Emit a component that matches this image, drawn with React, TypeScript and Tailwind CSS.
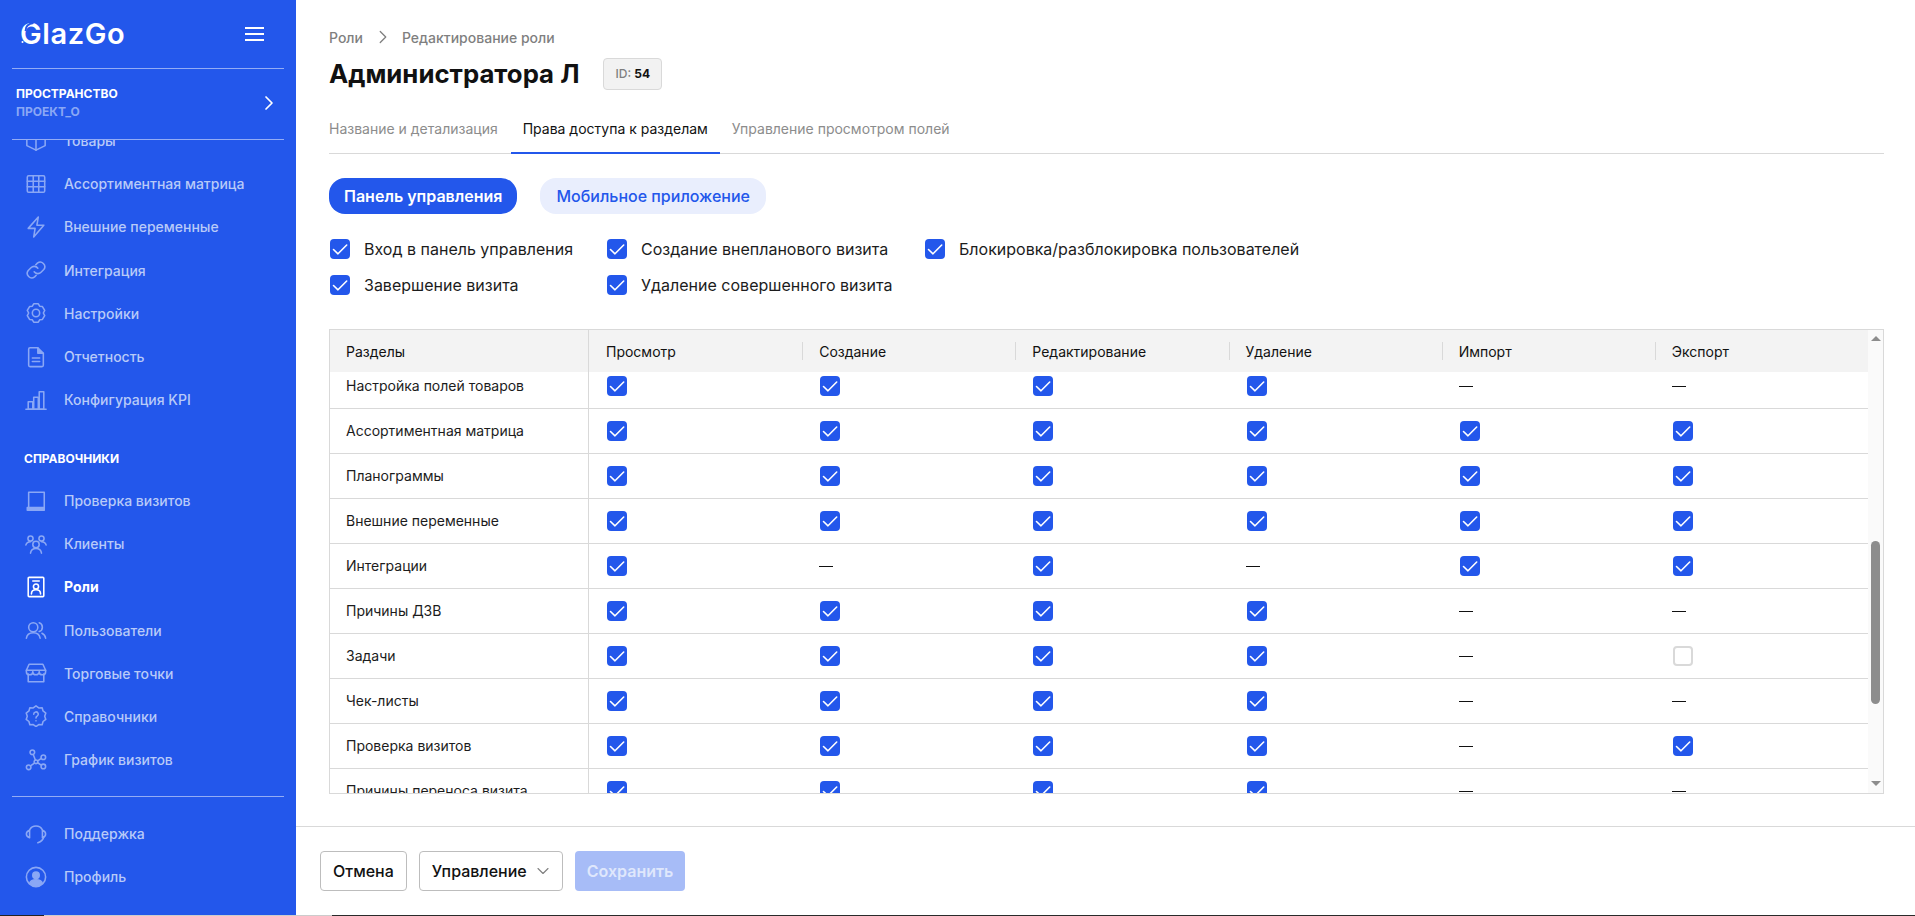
import { ChevronDown, ChevronRight } from "lucide-react";
import type { ReactNode } from "react";

function Svg({ children }: { children: ReactNode }) {
  return (
    <svg viewBox="0 0 24 24" fill="none" stroke="currentColor" strokeWidth="1.700" strokeLinecap="round" strokeLinejoin="round" className="w-[22px] h-[22px]">
      {children}
    </svg>
  );
}

const icons: Record<string, ReactNode> = {
  box: <Svg><path d="M2 6l10-4 10 4v11l-10 5-10-5z" /><path d="M2 6l10 4 10-4M12 10v12" /></Svg>,
  grid: <Svg><rect x="2.500" y="3" width="19" height="18" rx="1.500" /><path d="M2.500 9h19M2.500 15h19M9 3v18M15 3v18" /></Svg>,
  bolt: <Svg><path d="M14.500 1L3.500 13.500h7.500l-1.500 9.500 11-13h-7.500z" /></Svg>,
  link: <Svg><path d="M10 14a5 5 0 0 0 7.500.5l3-3a5 5 0 0 0-7-7l-1.700 1.700" /><path d="M14 10a5 5 0 0 0-7.500-.5l-3 3a5 5 0 0 0 7 7l1.700-1.700" /></Svg>,
  gear: <Svg><circle cx="12" cy="12" r="4" /><path d="M9.500 2h5l1.500 2.600 3 .4 2.500 4.200L20 12l1.500 2.800-2.500 4.200-3 .4L14.500 22h-5L8 19.400l-3-.4-2.500-4.200L4 12 2.500 9.200 5 5l3-.4z" /></Svg>,
  doc: <Svg><path d="M4 3.500A1.500 1.500 0 0 1 5.500 2H14l6 6v13a1.500 1.500 0 0 1-1.500 1.500h-13A1.500 1.500 0 0 1 4 21z" /><path d="M14 2v6h6" fill="currentColor" /><path d="M8 13h8M8 17h8" /></Svg>,
  bars: <Svg><path d="M1 22h22" /><rect x="3.500" y="14" width="5" height="8" /><rect x="9.500" y="9" width="5" height="13" /><rect x="15.500" y="3" width="5" height="19" /></Svg>,
  book: <Svg><path d="M4 19V2.500h17V21" /><path d="M2.500 19h18.500v3H2.500z" fill="currentColor" /></Svg>,
  team: <Svg><circle cx="12" cy="12.500" r="3.500" /><path d="M6 22c.5-3.500 3-5 6-5s5.500 1.500 6 5" /><circle cx="6" cy="6" r="2.800" /><circle cx="18" cy="6" r="2.800" /><path d="M1 13c.5-2 2.500-3.500 5-3.500M23 13c-.5-2-2.500-3.500-5-3.500" /></Svg>,
  role: <Svg><rect x="3.500" y="1.500" width="17" height="21" rx="1" /><path d="M8.500 5.500h7" /><circle cx="12" cy="11.500" r="2.800" /><path d="M7 19.500c0-3 2.200-4.500 5-4.500s5 1.500 5 4.500" /></Svg>,
  users: <Svg><circle cx="9" cy="9" r="5" /><path d="M1.500 21c.5-3.500 3.500-6 7.500-6s7 2.500 7.500 6" /><path d="M15.500 4.200a5 5 0 0 1 0 9.500M18.500 15.500c2.200.9 3.700 3 4 5.500" /></Svg>,
  store: <Svg><path d="M4.500 2.500h15L22.500 9h-21z" /><path d="M1.500 9v1.500a3.500 3.500 0 0 0 7 0 3.500 3.500 0 0 0 7 0 3.500 3.500 0 0 0 7 0V9" /><path d="M3.500 13v8.500h17V13" /></Svg>,
  help: <Svg><path d="M12 1l3 2.200 3.700-.2 1 3.500 3 2.300-1.200 3.500 1.200 3.400-3 2.300-1 3.500-3.700-.2-3 2.200-3-2.200-3.700.2-1-3.500-3-2.300 1.200-3.400L1.300 8.800l3-2.300 1-3.500 3.700.2z" /><path d="M9.500 10a2.500 2.500 0 1 1 3.700 2.200c-.8.500-1.200 1-1.200 2" /><path d="M12 17.200v.1" /></Svg>,
  graph: <Svg><circle cx="8" cy="3.500" r="2.500" /><circle cx="4" cy="20" r="2.500" /><circle cx="20" cy="9" r="2.500" /><circle cx="20" cy="19" r="2.500" /><circle cx="12" cy="14" r="2" /><path d="M9 6l2.300 6M6 18.500l4.300-3.200M13.800 13l4-2.800M13.800 15l4 2.500" /></Svg>,
  headset: <Svg><path d="M5 7.500a8 8 0 0 1 14 0" /><path d="M20.500 15c-.5 3-3 5.500-6.500 6.500" /><path d="M5 8C3 8.700 1.500 10.200 1.500 12S3 15.300 5 16zM19 8c2 .7 3.500 2.200 3.500 4s-1.500 3.300-3.500 4z" /></Svg>,
  profile: (
    <Svg>
      <circle cx="12" cy="12" r="10.500" />
      <circle cx="12" cy="10" r="3.500" fill="currentColor" />
      <path d="M5 19c1-3 4-4 7-4s6 1 7 4c-2 2-4.500 3-7 3s-5-1-7-3z" fill="currentColor" />
    </Svg>
  ),
};

function NavItem({ icon, label, active }: { icon: string; label: string; active?: boolean }) {
  return (
    <div className={`flex items-center h-[43.2px] pl-[25px] gap-[17px] text-[14px] ${active ? "text-white font-bold" : "text-[#b8caf8] font-medium"}`}>
      <span className={active ? "text-white" : "text-[#8aa7f5]"}>{icons[icon]}</span>
      <span>{label}</span>
    </div>
  );
}

function Check({ checked = true }: { checked?: boolean }) {
  if (!checked) {
    return <span className="w-5 h-5 block rounded-[4px] border-2 border-[#d9d9d9] bg-white" />;
  }
  return (
    <span className="w-5 h-5 shrink-0 flex items-center justify-center rounded-[4px] bg-[#2357eb] text-white">
      <svg viewBox="0 0 20 20" className="w-full h-full" fill="none" stroke="currentColor" strokeWidth="1.600" strokeLinecap="round" strokeLinejoin="round">
        <path d="M3.500 10.500l4.500 4.300 8.700-8.800" />
      </svg>
    </span>
  );
}

// 1 = галочка, 0 = пустой, null = тире
type Cell = 1 | 0 | null;
const rows: { name: string; cells: Cell[] }[] = [
  { name: "Настройка полей товаров", cells: [1, 1, 1, 1, null, null] },
  { name: "Ассортиментная матрица", cells: [1, 1, 1, 1, 1, 1] },
  { name: "Планограммы", cells: [1, 1, 1, 1, 1, 1] },
  { name: "Внешние переменные", cells: [1, 1, 1, 1, 1, 1] },
  { name: "Интеграции", cells: [1, null, 1, null, 1, 1] },
  { name: "Причины ДЗВ", cells: [1, 1, 1, 1, null, null] },
  { name: "Задачи", cells: [1, 1, 1, 1, null, 0] },
  { name: "Чек-листы", cells: [1, 1, 1, 1, null, null] },
  { name: "Проверка визитов", cells: [1, 1, 1, 1, null, 1] },
  { name: "Причины переноса визита", cells: [1, 1, 1, 1, null, null] },
];

const columns = ["Просмотр", "Создание", "Редактирование", "Удаление", "Импорт", "Экспорт"];
const gridCols = "grid grid-cols-[259px_repeat(6,1fr)]";

function GlazLogo() {
  return (
    <div className="relative flex items-center">
      <span className="text-[29px] leading-none font-semibold text-white tracking-[0.6px]">GlazGo</span>
      <svg viewBox="0 0 24 28" className="absolute left-[-1px] top-[-2px] w-[24px] h-[28px]" fill="none">
        <path d="M6.500 14c0-4.500 3-7.500 8-8" stroke="#2357eb" strokeWidth="1.800" />
        <circle cx="3.500" cy="25" r="1" fill="white" />
      </svg>
    </div>
  );
}

export default function App() {
  return (
    <div className="flex flex-col h-[916px] w-full bg-white overflow-hidden text-[#111] font-['Inter',sans-serif]">
      <div className="flex flex-1 min-h-0">
        <aside className="w-[296px] shrink-0 bg-[#2357eb] flex flex-col">
          <div className="h-[69px] mx-3 shrink-0 border-b border-[#93acf5] flex items-center justify-between pl-[8px] pr-[20px] pb-[1px]">
            <GlazLogo />
            <div className="flex flex-col gap-[4px] w-[19px]">
              <span className="h-[2px] bg-white" />
              <span className="h-[2px] bg-white" />
              <span className="h-[2px] bg-white" />
            </div>
          </div>
          <div className="h-[71px] mx-3 shrink-0 border-b border-[#93acf5] flex items-center justify-between pl-[4px] pr-[3px] pb-[2px]">
            <div className="flex flex-col gap-[4px]">
              <span className="text-[12px] leading-[14px] font-bold text-white">ПРОСТРАНСТВО</span>
              <span className="text-[12px] leading-[14px] font-bold text-[#8aa7f5]">ПРОЕКТ_О</span>
            </div>
            <ChevronRight className="w-6 h-6 text-white" strokeWidth={1.7} />
          </div>

          <div className="flex-1 overflow-hidden min-h-0">
            <div className="-mt-[21px]">
              <NavItem icon="box" label="Товары" />
              <NavItem icon="grid" label="Ассортиментная матрица" />
              <NavItem icon="bolt" label="Внешние переменные" />
              <NavItem icon="link" label="Интеграция" />
              <NavItem icon="gear" label="Настройки" />
              <NavItem icon="doc" label="Отчетность" />
              <NavItem icon="bars" label="Конфигурация KPI" />
              <div className="pl-[24px] pt-[28px] pb-[9.600px] text-[12px] leading-[20px] font-bold text-white">СПРАВОЧНИКИ</div>
              <NavItem icon="book" label="Проверка визитов" />
              <NavItem icon="team" label="Клиенты" />
              <NavItem icon="role" label="Роли" active />
              <NavItem icon="users" label="Пользователи" />
              <NavItem icon="store" label="Торговые точки" />
              <NavItem icon="help" label="Справочники" />
              <NavItem icon="graph" label="График визитов" />
            </div>
          </div>

          <div className="shrink-0 h-[119px]">
            <div className="mx-3 h-px bg-[#93acf5]" />
            <div className="pt-[15px]">
              <NavItem icon="headset" label="Поддержка" />
              <NavItem icon="profile" label="Профиль" />
            </div>
          </div>
        </aside>

        <main className="flex-1 min-w-0 flex flex-col">
          <div className="flex-1 min-h-0 pl-[33px] pr-[31px] pt-[27px]">
            <div className="flex items-center h-[20px] text-[14px] font-medium text-[#7f7f7f]">
              <span>Роли</span>
              <ChevronRight className="w-[22px] h-[22px] ml-[9px] mr-[8px] text-[#7f7f7f]" strokeWidth={1.4} />
              <span>Редактирование роли</span>
            </div>

            <div className="flex items-center mt-[11px] h-[32px]">
              <h1 className="text-[25.750px] font-bold leading-[32px] text-[#111]">Администратора Л</h1>
              <div className="ml-[24px] h-[32px] px-[11px] flex items-center rounded-[4px] border border-[#d9d9d9] bg-[#f2f2f2] text-[12px] font-medium text-[#7f7f7f]">
                ID:&nbsp;<span className="font-bold text-[#111]">54</span>
              </div>
            </div>

            <div className="flex mt-[20px] h-[44px] border-b border-[#d9d9d9] text-[14px]">
              <div className="pr-[13px] pt-[8px] text-[#8c8c8c]">Название и детализация</div>
              <div className="px-[12px] pt-[8px] text-[#111] border-b-2 border-[#2357eb] h-[44px]">Права доступа к разделам</div>
              <div className="px-[12px] pt-[8px] text-[#8c8c8c]">Управление просмотром полей</div>
            </div>

            <div className="flex gap-[23px] mt-[24px]">
              <button className="h-[36px] px-[15px] rounded-[16px] bg-[#2357eb] text-white text-[16px] font-semibold">Панель управления</button>
              <button className="h-[36px] px-[16px] rounded-[16px] bg-[#e9eefd] text-[#2357eb] text-[16px] font-medium">Мобильное приложение</button>
            </div>

            <div className="grid grid-cols-[277px_318px_auto] justify-start mt-[25px] gap-y-[16px] pl-[1px] text-[16px] text-[#1c1c1c]">
              <label className="flex items-center gap-[14px] h-[20px]"><Check /> Вход в панель управления</label>
              <label className="flex items-center gap-[14px] h-[20px]"><Check /> Создание внепланового визита</label>
              <label className="flex items-center gap-[14px] h-[20px]"><Check /> Блокировка/разблокировка пользователей</label>
              <label className="flex items-center gap-[14px] h-[20px]"><Check /> Завершение визита</label>
              <label className="flex items-center gap-[14px] h-[20px]"><Check /> Удаление совершенного визита</label>
            </div>

            <div className="flex mt-[34px] h-[465px] border border-[#d9d9d9] overflow-hidden">
              <div className="flex-1 min-w-0 flex flex-col">
                <div className={`${gridCols} h-[42px] bg-[#f3f3f3] items-center text-[14px] shrink-0 relative z-10`}>
                  <div className="pl-[16px] h-full flex items-center border-r border-[#d9d9d9]">Разделы</div>
                  {columns.map((c, i) => (
                    <div key={c} className="relative pl-[17px]">
                      {i > 0 && <span className="absolute left-0 top-[1px] h-[18px] w-[1px] bg-[#d9d9d9]" />}
                      {c}
                    </div>
                  ))}
                </div>
                <div className="flex-1 min-h-0 overflow-hidden">
                  <div className="-mt-[8px]">
                    {rows.map((r) => (
                      <div key={r.name} className={`${gridCols} h-[45px] border-b border-[#d9d9d9] items-center text-[14px] text-[#1c1c1c]`}>
                        <div className="pl-[16px] h-full flex items-center border-r border-[#d9d9d9] leading-none">{r.name}</div>
                        {r.cells.map((v, i) => (
                          <div key={i} className="pl-[18px] h-full flex items-center">
                            {v === null ? (
                              <span className="block w-[14px] h-[1px] bg-[#111] -ml-[1px]" />
                            ) : (
                              <Check checked={v === 1} />
                            )}
                          </div>
                        ))}
                      </div>
                    ))}
                  </div>
                </div>
              </div>
              {/* скроллбар */}
              <div className="w-[15px] shrink-0 bg-[#fafafa] flex flex-col items-center relative">
                <span className="mt-[6px] w-0 h-0 border-l-[5px] border-r-[5px] border-b-[5px] border-l-transparent border-r-transparent border-b-[#8d8d8d]" />
                <span className="absolute left-[3px] w-[9px] top-[211px] h-[163px] rounded-[5px] bg-[#8d8d8d]" />
                <span className="mt-auto mb-[7px] w-0 h-0 border-l-[5px] border-r-[5px] border-t-[5px] border-l-transparent border-r-transparent border-t-[#8d8d8d]" />
              </div>
            </div>
          </div>

          <div className="h-[89px] shrink-0 border-t border-[#d9d9d9] flex items-center gap-[12px] pl-[24px] text-[16px] font-medium">
            <button className="h-[40px] px-[12px] rounded-[4px] border border-[#bdbdbd] text-[#111]">Отмена</button>
            <button className="h-[40px] pl-[12px] pr-[9px] rounded-[4px] border border-[#bdbdbd] text-[#111] flex items-center gap-[6px]">
              Управление <ChevronDown className="w-[20px] h-[20px] text-[#7f7f7f]" strokeWidth={1.3} />
            </button>
            <button className="h-[40px] px-[12px] rounded-[4px] bg-[#a7bcf7] text-[#dfe7fc] font-semibold">Сохранить</button>
          </div>
        </main>
      </div>
      {/* нижняя полоса скриншота */}
      <div className="h-px shrink-0 flex">
        <span className="w-[44px] bg-[#222]" />
        <span className="w-[288px] bg-[#ccc]" />
        <span className="flex-1 bg-[#2a2a2a]" />
      </div>
    </div>
  );
}
